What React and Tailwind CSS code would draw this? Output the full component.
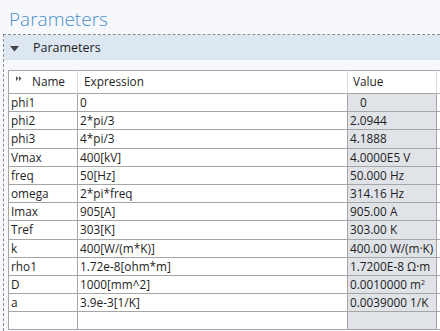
import React from "react";

const rows = [
  ["phi1", "0", "0", true],
  ["phi2", "2*pi/3", "2.0944"],
  ["phi3", "4*pi/3", "4.1888"],
  ["Vmax", "400[kV]", "4.0000E5 V"],
  ["freq", "50[Hz]", "50.000 Hz"],
  ["omega", "2*pi*freq", "314.16 Hz"],
  ["Imax", "905[A]", "905.00 A"],
  ["Tref", "303[K]", "303.00 K"],
  ["k", "400[W/(m*K)]", "400.00 W/(m·K)"],
  ["rho1", "1.72e-8[ohm*m]", "1.7200E-8 Ω·m"],
  ["D", "1000[mm^2]", <>0.0010000 m<sup className="text-[7px]">2</sup></>],
  ["a", "3.9e-3[1/K]", "0.0039000 1/K"],
  ["", "", ""],
];

export default function App() {
  return (
    <div
      className="w-[440px] h-[331px] overflow-hidden bg-[#f7f8fc] text-[#1e1e1e]"
      style={{ fontFamily: '"Open Sans", "Noto Sans", sans-serif' }}
    >
      {/* page title */}
      <div className="h-[34px] pl-[9px] pt-[6px] text-[19px] font-light leading-[26px] text-[#4b8fc8]">
        Parameters
      </div>

      <div className="ml-[3px] h-[297px] border-l border-t border-dashed border-[#8c8c8c]">
        {/* section header */}
        <div className="flex h-[25px] items-center bg-[#dde7f2] pt-[2px]">
          <svg width="9" height="6" viewBox="0 0 9 6" className="ml-[6px]">
            <path d="M0 0 H9 L4.5 5.5 Z" fill="#444" />
          </svg>
          <span className="ml-[14px] text-[12.5px]">Parameters</span>
        </div>

        <div className="pl-[4px] pt-[10px]">
          <table className="w-[440px] table-fixed border-collapse bg-white text-[11.8px]">
            <colgroup>
              <col className="w-[69px]" />
              <col className="w-[270px]" />
              <col className="w-[89px]" />
              <col />
            </colgroup>
            <thead>
              <tr className="border-t border-b border-[#a5a5a5]">
                <th className="relative h-[23px] border-l border-[#a5a5a5] pl-[23px] text-left font-normal">
                  <svg
                    width="6"
                    height="5"
                    viewBox="0 0 6 5"
                    className="absolute left-[7px] top-[5px]"
                  >
                    <path d="M0 0 L2.5 2.5 L0 5 Z M3 0 L5.5 2.5 L3 5 Z" fill="#555" />
                  </svg>
                  Name
                </th>
                <th className="border-l border-[#dadada] pl-[6px] text-left font-normal">
                  Expression
                </th>
                <th className="border-l border-[#dadada] pl-[5px] text-left font-normal">
                  Value
                </th>
                <th className="border-l border-[#dadada]" />
              </tr>
            </thead>
            <tbody>
              {rows.map(([name, expr, val, centered], i) => (
                <tr key={i} className="border-b border-[#a5a5a5]">
                  <td className="h-[18.2px] border-l border-[#a5a5a5] p-0 pl-[2px] leading-[17px]">
                    {name}
                  </td>
                  <td className="border-l border-[#a5a5a5] p-0 pl-[2px] leading-[17px]">
                    {expr}
                  </td>
                  <td
                    className={`border-l border-[#a5a5a5] bg-[#e0e3e8] p-0 leading-[17px] whitespace-nowrap ${
                      centered ? "pl-[12px]" : "pl-[2px]"
                    }`}
                  >
                    {val}
                  </td>
                  <td className="border-l border-[#a5a5a5]" />
                </tr>
              ))}
            </tbody>
          </table>
        </div>
      </div>
    </div>
  );
}
